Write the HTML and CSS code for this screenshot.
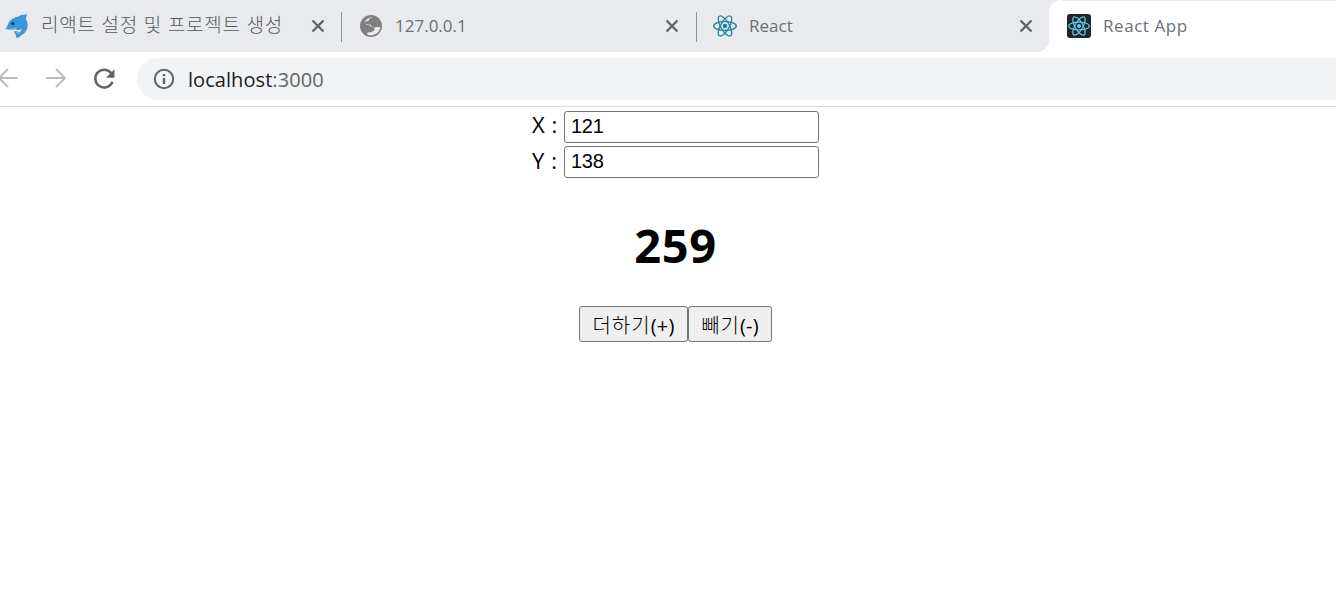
FILE: index.html
```html
<!DOCTYPE html>
<html lang="ko">
<head>
<meta charset="utf-8">
<title>React App</title>
<link rel="stylesheet" href="styles.css">
</head>
<body>
<svg class="defs" width="0" height="0">
  <symbol id="close" viewBox="0 0 14 14"><path d="M1.500 1.500l11 11M12.500 1.500l-11 11" fill="none" stroke="#5f6368" stroke-width="2.300"/></symbol>
  <symbol id="atom" viewBox="-12 -12 24 24">
    <circle r="2.300" fill="currentColor"/>
    <g fill="none" stroke="currentColor" stroke-width="1.300">
      <ellipse rx="11.300" ry="4.300"/><ellipse rx="11.300" ry="4.300" transform="rotate(60)"/><ellipse rx="11.300" ry="4.300" transform="rotate(120)"/>
    </g>
  </symbol>
</svg>
<header class="browser">
  <nav class="tabs">
    <div class="tab tab-first">
      <svg class="favicon" viewBox="0 0 24 24">
        <path d="M.5 14.800C1.500 13.500 2.300 12 3.200 10 4.800 5.500 8.500 3.500 13 2.800 15 1 18 .3 22.500.5 21 2 20.700 3.800 21.100 5.500 23.600 9.500 23.300 15 20 18.200c-1 1.500-2.400 2.300-3.700 2.700-.7 1.600-3 3-5.700 2.700.8-1.300.7-2.200-.1-3.200-1-1-1.500-2.300-1-3.300 1.800-.3 3.700.3 5 1.300 1.200-.6 1.900-1.900 1.900-3.700-1.400 1.400-3.400 1.700-5 .8C7.500 15.800 3.500 16.200.5 14.800z" fill="#3c96dc"/>
        <path d="M1.500 15c3.500.2 6.500-.2 9.300-1.300l.7 1.600C8 16.200 4 16.200 1.500 15z" fill="#8cc6ee"/>
        <path d="M10.500 17.800c1.600.2 2.800.8 3.900 1.900" fill="none" stroke="#9bcdf0" stroke-width="1"/>
        <circle cx="7.800" cy="9.500" r="1.600" fill="#17344d"/>
      </svg>
      <span class="title title-ko">리액트 설정 및 프로젝트 생성</span>
      <svg class="close"><use href="#close"/></svg>
    </div>
    <div class="tab">
      <svg class="favicon" viewBox="0 0 24 24">
        <circle cx="12" cy="12" r="11" fill="#808080"/>
        <path d="M13.700 2.900C11 2.800 8 4.500 6.200 7.200 5.200 9.300 6.800 11 9 10.700l2.500-.1c.9 2.500 2.600 3.200 4.700 2.800 1.500-.5 3.400-.6 5.200.2-.7 4-4 7.300-8.200 7.600-1.700.2-3.300-.1-4.900-.8l.1-1.900 2.800-.3c3-.3 4.600-2 4.300-3.800-.3-1.700-2-2-4.300-1.900-.4-1.900-1.700-2.700-4-2.500-1.300.1-1.700-.7-1.300-1.700.5-1.200 1.900-.8 3.200-1.300 1.700-.7.9-2.200 2.100-3z" fill="#e8eaed"/>
      </svg>
      <span class="title">127.0.0.1</span>
      <svg class="close"><use href="#close"/></svg>
    </div>
    <div class="tab">
      <svg class="favicon react"><use href="#atom"/></svg>
      <span class="title">React</span>
      <svg class="close"><use href="#close"/></svg>
    </div>
    <div class="tab active">
      <svg class="favicon react-dark"><use href="#atom"/></svg>
      <span class="title app-title">React App</span>
    </div>
  </nav>
  <div class="toolbar">
    <svg class="nav-icons" viewBox="0 0 137 42" fill="none">
      <path d="M17.500 20H-1M8 11l-9 9 9 9M46 20h18.500M56 11l9 9-9 9" stroke="#babcbe" stroke-width="2"/>
      <path d="M111.500 15.500A8.900 8.900 0 1 0 112.500 23.800" stroke="#5f6368" stroke-width="2.400"/>
      <path d="M114.500 11.300v8.500H106z" fill="#5f6368"/>
    </svg>
    <div class="address">
      <svg class="info" viewBox="0 0 22 22"><circle cx="11" cy="11" r="9.200" fill="none" stroke="#5f6368" stroke-width="2"/><path d="M9.800 10h2.400v6H9.800zM9.800 6h2.400v2.300H9.800z" fill="#5f6368"/></svg>
      <span class="url"><b>localhost</b>:3000</span>
    </div>
  </div>
</header>
<main class="app">
  <label class="field"><span class="name">X :</span><input type="text" value="121"></label>
  <label class="field"><span class="name">Y :</span><input type="text" value="138"></label>
  <h1>259</h1>
  <div class="actions"><button class="plus">더하기<span>(+)</span></button><button class="minus">빼기<span>(-)</span></button></div>
</main>
</body>
</html>
```
FILE: styles.css
```css
* { box-sizing: border-box; }
body { margin: 0; height: 594px; overflow: hidden; background: #fff; font-family: "Open Sans", "Noto Sans CJK KR", sans-serif; }
.defs { display: block; height: 0; }
.browser { height: 107px; border-bottom: 1px solid #d8dadd; }
.tabs { display: flex; height: 52px; }
.tab { display: flex; align-items: center; flex: none; width: 354px; height: 52px; padding: 0 17px; background: #e8eaed; }
.tab-first { width: 342px; padding-left: 5px; }
.tab:nth-child(-n+2) { background: linear-gradient(#909398, #909398) right 12px / 1.5px 30px no-repeat #e8eaed; }
.tab:nth-child(2) { width: 355px; padding-right: 18px; }
.tab:nth-child(3) { width: 352px; padding: 0 16px; border-bottom-right-radius: 12px; }
.tab.active { width: 287px; background: radial-gradient(circle at 100% 100%, transparent 11.5px, #e8eaed 12.5px) 0 0 / 12px 12px no-repeat, linear-gradient(#e8eaed, #e8eaed) 12px 0 / 100% 1px no-repeat #fff; }
.favicon { width: 24px; height: 24px; flex: none; margin-right: 12px; overflow: visible; }
.react { color: #2383a4; }
.react-dark { color: #61cbe6; background: #20232a; border-radius: 3px; padding: 1px; margin-left: 1px; }
.title { flex: 1; white-space: nowrap; font-size: 17px; line-height: 24px; color: #6d7074; }
.title-ko { font-family: "Noto Sans CJK KR", sans-serif; font-size: 19px; font-weight: 300; letter-spacing: .68px; padding-bottom: 4px; color: #55585c; }
.app-title { letter-spacing: .55px; }
.close { width: 14px; height: 14px; flex: none; }
.toolbar { display: flex; height: 54px; padding-top: 6px; }
.nav-icons { width: 137px; height: 42px; flex: none; }
.address { display: flex; align-items: center; flex: 1; height: 42px; padding-left: 16px; background: #f1f3f4; border-radius: 21px 0 0 21px; }
.info { width: 22px; height: 22px; margin-right: 13px; }
.url { font-size: 20px; line-height: 28px; padding-top: 1px; letter-spacing: .06px; color: #606468; }
.url b { font-weight: 400; color: #202124; }
.app { display: flex; flex-direction: column; align-items: center; padding: 4px 0 0 15px; color: #000; }
.field { display: flex; width: 287px; height: 32px; margin-bottom: 3px; font-size: 22px; line-height: 28px; }
.field:first-child { line-height: 27px; }
.name { width: 32px; flex: none; white-space: nowrap; letter-spacing: .6px; }
input { width: 255px; height: 32px; border: 1px solid #767676; border-radius: 3px; padding: 0 6px 1px; font: 20px/28px "Liberation Sans", sans-serif; letter-spacing: -.3px; color: #000; background: #fff; }
.field:first-child input { padding-bottom: 2px; }
h1 { margin: 32px 0 29px; font-size: 47px; line-height: 64px; font-weight: 700; letter-spacing: .7px; }
.actions { display: flex; }
button { height: 36px; padding: 2px 0 0; border: 1px solid #767676; border-radius: 3px; background: #efefef; color: #000; font: 300 20px/32px "Noto Sans CJK KR", sans-serif; letter-spacing: 1px; white-space: nowrap; }
button span { font: 400 20px/30px "Open Sans", sans-serif; letter-spacing: .2px; }
.plus { width: 109px; }
.minus { width: 84px; }
```
